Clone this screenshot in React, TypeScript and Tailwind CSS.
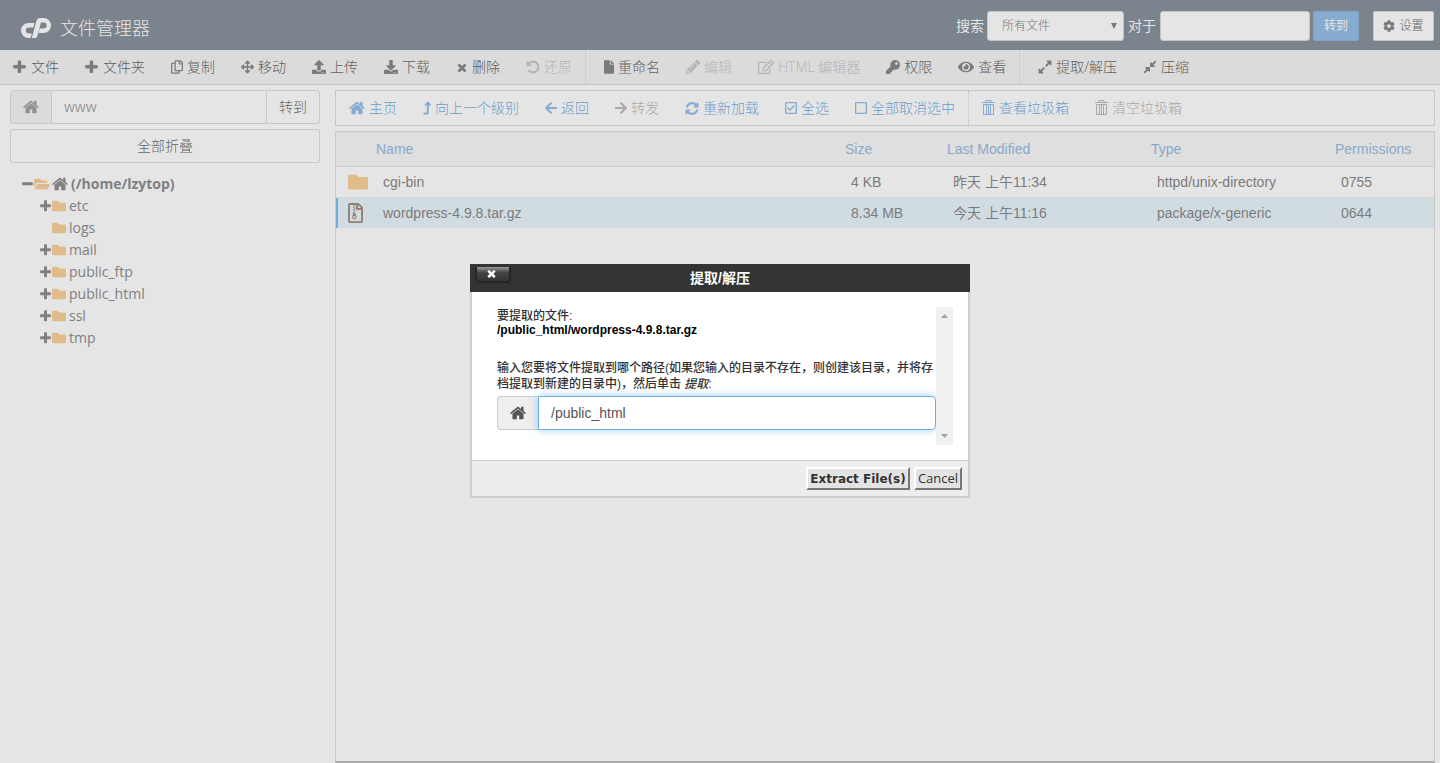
import { useState } from "react";
import type { ReactNode } from "react";
import {
  FaArrowLeft,
  FaArrowRight,
  FaArrowsAlt,
  FaCog,
  FaDownload,
  FaEye,
  FaFile,
  FaFolder,
  FaFolderOpen,
  FaKey,
  FaLevelUpAlt,
  FaPencilAlt,
  FaRegCheckSquare,
  FaRegCopy,
  FaRegEdit,
  FaRegFileArchive,
  FaRegSquare,
  FaUpload,
} from "react-icons/fa";

const glyphs = {
  plus: "M1600 736v192q0 40-28 68t-68 28h-416v416q0 40-28 68t-68 28h-192q-40 0-68-28t-28-68v-416h-416q-40 0-68-28t-28-68v-192q0-40 28-68t68-28h416v-416q0-40 28-68t68-28h192q40 0 68 28t28 68v416h416q40 0 68 28t28 68z",
  minus: "M1600 736v192q0 40-28 68t-68 28h-1216q-40 0-68-28t-28-68v-192q0-40 28-68t68-28h1216q40 0 68 28t28 68z",
  times: "M1490 1322q0 40-28 68l-136 136q-28 28-68 28t-68-28l-294-294-294 294q-28 28-68 28t-68-28l-136-136q-28-28-28-68t28-68l294-294-294-294q-28-28-28-68t28-68l136-136q28-28 68-28t68 28l294 294 294-294q28-28 68-28t68 28l136 136q28 28 28 68t-28 68l-294 294 294 294q28 28 28 68z",
  undo: "M1664 896q0 156-61 298t-164 245-245 164-298 61q-172 0-327-72.5t-264-204.5q-7-10-6.5-22.5t8.5-20.5l137-138q10-9 25-9 16 2 23 12 73 95 179 147t225 52q104 0 198.5-40.5t163.5-109.5 109.5-163.5 40.5-198.5-40.5-198.5-109.5-163.5-163.5-109.5-198.5-40.5q-98 0-188 35.5t-160 101.5l137 138q31 30 14 69-17 40-59 40h-448q-26 0-45-19t-19-45v-448q0-42 40-59 39-17 69 14l130 129q107-101 244.5-156.5t284.5-55.5q156 0 298 61t245 164 164 245 61 298z",
  expand: "M883 1056q0 13-10 23l-332 332 144 144q19 19 19 45t-19 45-45 19h-448q-26 0-45-19t-19-45v-448q0-26 19-45t45-19 45 19l144 144 332-332q10-10 23-10t23 10l114 114q10 10 10 23zm781-864v448q0 26-19 45t-45 19-45-19l-144-144-332 332q-10 10-23 10t-23-10l-114-114q-10-10-10-23t10-23l332-332-144-144q-19-19-19-45t19-45 45-19h448q26 0 45 19t19 45z",
  compress: "M896 960v448q0 26-19 45t-45 19-45-19l-144-144-332 332q-10 10-23 10t-23-10l-114-114q-10-10-10-23t10-23l332-332-144-144q-19-19-19-45t19-45 45-19h448q26 0 45 19t19 45zm755-672q0 13-10 23l-332 332 144 144q19 19 19 45t-19 45-45 19h-448q-26 0-45-19t-19-45v-448q0-26 19-45t45-19 45 19l144 144 332-332q10-10 23-10t23 10l114 114q10 10 10 23z",
  refresh: "M1639 1056q0 5-1 7-64 268-268 434.5t-478 166.5q-146 0-282.5-55t-243.5-157l-129 129q-19 19-45 19t-45-19-19-45v-448q0-26 19-45t45-19h448q26 0 45 19t19 45-19 45l-137 137q71 66 161 102t187 36q134 0 250-65t186-179q11-17 53-117 8-23 30-23h192q13 0 22.5 9.5t9.5 22.5zm25-800v448q0 26-19 45t-45 19h-448q-26 0-45-19t-19-45 19-45l138-138q-148-137-349-137-134 0-250 65t-186 179q-11 17-53 117-8 23-30 23h-199q-13 0-22.5-9.5t-9.5-22.5v-7q65-268 270-434.5t480-166.5q146 0 284 55.5t245 156.5l130-129q19-19 45-19t45 19 19 45z",
  home: "M1472 992v480q0 26-19 45t-45 19h-384v-384h-256v384h-384q-26 0-45-19t-19-45v-480q0-1 .5-3t.5-3l575-474 575 474q1 2 1 6zm223-69l-62 74q-8 9-21 11h-3q-13 0-21-7l-692-577-692 577q-12 8-24 7-13-2-21-11l-62-74q-8-10-7-23.5t11-21.5l719-599q32-26 76-26t76 26l244 204v-195q0-14 9-23t23-9h192q14 0 23 9t9 23v408l219 182q10 8 11 21.5t-7 23.5z",
};

function Glyph({ name, className }: { name: keyof typeof glyphs; className: string }) {
  const narrow = name === "plus" || name === "minus";
  return (
    <svg viewBox={narrow ? "180 80 1560 1560" : "64 64 1664 1664"} fill="currentColor" className={className} aria-hidden="true">
      <path d={glyphs[name]} />
    </svg>
  );
}

function Logo() {
  return (
    <svg viewBox="0 0 30 20" className="mt-[6px] h-5 w-[30px] fill-current" role="img" aria-label="cPanel">
      <path d="M13.5 5H7.5A7.5 7.5 0 0 0 7.5 20H9.5L10.8 15.5H7.8A3 3 0 0 1 7.8 9.5H12.2Z" />
      <path d="M10.8 20L15.4 3Q16.3 0 19.3 0H22.7A7.3 7.5 0 0 1 22.7 15H17.5L18.7 10.5H22.6A3 3 0 0 0 22.6 4.5H20L16.1 18.4Q15.6 20 14 20Z" />
    </svg>
  );
}

function Trash() {
  return (
    <svg viewBox="0 0 13 16" className="h-4 w-[13px] shrink-0" fill="none" stroke="currentColor" aria-hidden="true">
      <path d="M0 2.5h13M4 2.5v-2h5v2" />
      <path d="M1.5 4.5v10h10v-10zM4.5 4.5v10M6.5 4.5v10M8.5 4.5v10" />
    </svg>
  );
}

type Tool = { label: string; icon: ReactNode; off?: boolean };

const fileTools: Tool[][] = [
  [
    { label: "文件", icon: <Glyph name="plus" className="size-[14px]" /> },
    { label: "文件夹", icon: <Glyph name="plus" className="size-[14px]" /> },
    { label: "复制", icon: <FaRegCopy className="h-[14px] w-3" /> },
    { label: "移动", icon: <FaArrowsAlt className="h-[14px] w-[13px]" /> },
    { label: "上传", icon: <FaUpload className="size-[14px]" /> },
    { label: "下载", icon: <FaDownload className="size-[14px]" /> },
    { label: "删除", icon: <Glyph name="times" className="h-[15px] w-3" /> },
    { label: "还原", icon: <Glyph name="undo" className="size-[14px]" />, off: true },
  ],
  [
    { label: "重命名", icon: <FaFile className="h-[14px] w-[10px]" /> },
    { label: "编辑", icon: <FaPencilAlt className="size-[14px]" />, off: true },
    { label: "HTML 编辑器", icon: <FaRegEdit className="size-4" />, off: true },
    { label: "权限", icon: <FaKey className="size-[14px]" /> },
    { label: "查看", icon: <FaEye className="size-4" /> },
  ],
  [
    { label: "提取/解压", icon: <Glyph name="expand" className="size-[14px]" /> },
    { label: "压缩", icon: <Glyph name="compress" className="size-[14px]" /> },
  ],
];

const navTools: Tool[][] = [
  [
    { label: "主页", icon: <Glyph name="home" className="size-4" /> },
    { label: "向上一个级别", icon: <FaLevelUpAlt className="h-[14px] w-2" /> },
    { label: "返回", icon: <FaArrowLeft className="h-[14px] w-3" /> },
    { label: "转发", icon: <FaArrowRight className="h-[14px] w-3" />, off: true },
    { label: "重新加载", icon: <Glyph name="refresh" className="h-[15px] w-[14px]" /> },
    { label: "全选", icon: <FaRegCheckSquare className="h-[14px] w-3" /> },
    { label: "全部取消选中", icon: <FaRegSquare className="h-[14px] w-3" /> },
  ],
  [
    { label: "查看垃圾箱", icon: <Trash /> },
    { label: "清空垃圾箱", icon: <Trash />, off: true },
  ],
];

const folders = [
  { name: "etc", open: true },
  { name: "logs", open: false },
  { name: "mail", open: true },
  { name: "public_ftp", open: true },
  { name: "public_html", open: true },
  { name: "ssl", open: true },
  { name: "tmp", open: true },
];

const files = [
  { name: "cgi-bin", size: "4 KB", modified: "昨天 上午11:34", type: "httpd/unix-directory", mode: "0755", folder: true },
  { name: "wordpress-4.9.8.tar.gz", size: "8.34 MB", modified: "今天 上午11:16", type: "package/x-generic", mode: "0644", folder: false },
];

function Header() {
  return (
    <header className="flex h-[50px] items-center bg-[#7b838c] pr-[6px] pl-[21px] text-[#e5e5e5]">
      <Logo />
      <h1 className="mt-[6px] ml-[9px] text-lg font-light">文件管理器</h1>
      <form className="mt-[2px] ml-auto flex items-center" onSubmit={(e) => e.preventDefault()}>
        <label htmlFor="scope" className="mr-[3px] text-sm">搜索</label>
        <div className="relative">
          <select
            id="scope"
            className="h-[30px] w-[137px] appearance-none rounded-[3px] border border-[#c4c4c4] bg-[#e5e5e5] pl-[14px] text-xs font-light text-[#777]"
          >
            <option>所有文件</option>
          </select>
          <svg viewBox="0 0 6 6" className="pointer-events-none absolute top-3 right-[7px] size-[6px] fill-[#777]" aria-hidden="true">
            <path d="M0 0h6L3 6z" />
          </svg>
        </div>
        <label htmlFor="query" className="mx-1 text-sm">对于</label>
        <input id="query" type="text" className="h-[30px] w-[150px] rounded-[3px] border border-[#c4c4c4] bg-[#e5e5e5] px-2 text-xs" />
        <button type="submit" className="ml-[3px] h-[30px] w-[46px] rounded-[2px] border border-[#7ca6cf] bg-[#87abce] text-xs">
          转到
        </button>
        <button
          type="button"
          className="ml-[14px] flex h-[30px] w-[61px] items-center justify-center gap-1 rounded-[2px] border border-[#c8c8c8] bg-[#e5e5e5] text-xs font-light text-[#666]"
        >
          <FaCog className="size-3 text-[#7a7a7a]" />
          设置
        </button>
      </form>
    </header>
  );
}

function ToolGroups({ groups, on, off, icon }: { groups: Tool[][]; on: string; off: string; icon: string }) {
  return (
    <>
      {groups.map((group, g) => (
        <div
          key={g}
          className={
            "flex h-full items-center" +
            (g < groups.length - 1 ? " border-r border-dotted border-[#c2c2c2]" : "") +
            (g > 0 && groups.length > 2 ? " pl-[5px]" : "")
          }
        >
          {group.map((tool) => (
            <button
              key={tool.label}
              type="button"
              disabled={tool.off}
              className={"flex h-full items-center gap-1 px-[13px] text-sm font-light whitespace-nowrap " + (tool.off ? off : on)}
            >
              <span className={tool.off ? "" : icon}>{tool.icon}</span>
              {tool.label}
            </button>
          ))}
        </div>
      ))}
    </>
  );
}

function Sidebar() {
  return (
    <aside className="w-[310px] shrink-0 text-[#808080]">
      <form className="flex h-[34px]" onSubmit={(e) => e.preventDefault()}>
        <label
          htmlFor="location"
          aria-label="Path"
          className="flex w-[42px] items-center justify-center rounded-l-[3px] border border-[#c8c8c8] bg-[#dbdbdb] text-[#919191]"
        >
          <Glyph name="home" className="size-4" />
        </label>
        <input
          id="location"
          type="text"
          defaultValue="www"
          className="min-w-0 flex-1 border-y border-[#c8c8c8] bg-[#e5e5e5] px-3 text-sm text-[#999]"
        />
        <button type="submit" className="w-[54px] rounded-r-[3px] border border-[#c8c8c8] text-sm font-light text-[#666]">
          转到
        </button>
      </form>
      <button type="button" className="mt-[5px] h-[34px] w-full rounded-[2px] border border-[#c8c8c8] text-sm font-light text-[#666]">
        全部折叠
      </button>
      <ul className="mt-[10px] pl-3 text-sm leading-[22px]">
        <li>
          <div className="flex items-center font-bold">
            <Glyph name="minus" className="size-3" />
            <FaFolderOpen className="size-4 text-[#dfbc8a]" />
            <Glyph name="home" className="mr-[3px] ml-[2px] size-4" />
            <span>(/home/lzytop)</span>
          </div>
          <ul className="pl-[18px]">
            {folders.map((f) => (
              <li key={f.name} className="flex items-center">
                {f.open ? <Glyph name="plus" className="size-3" /> : <span className="w-3" />}
                <FaFolder className="size-[14px] text-[#dfbc8a]" />
                <span className="ml-[3px]">{f.name}</span>
              </li>
            ))}
          </ul>
        </li>
      </ul>
    </aside>
  );
}

function FileTable() {
  return (
    <div className="mt-[5px] flex-1 border border-b-2 border-[#c8c8c8] border-b-[#ababab]">
      <table className="w-full table-fixed border-collapse text-left font-['Liberation_Sans','Noto_Sans_CJK_SC',sans-serif] text-sm text-[#7b7b7b]">
        <colgroup>
          <col className="w-[35px]" />
          <col />
          <col className="w-[102px]" />
          <col className="w-[204px]" />
          <col className="w-[184px]" />
          <col className="w-[104px]" />
        </colgroup>
        <thead>
          <tr className="h-[34px] border-b border-[#c8c8c8] bg-[#dfdfdf] text-[#87a9cc]">
            <th aria-label="Icon" />
            {["Name", "Size", "Last Modified", "Type", "Permissions"].map((h) => (
              <th key={h} className="pl-[5px] font-normal">{h}</th>
            ))}
          </tr>
        </thead>
        <tbody>
          {files.map((f) => (
            <tr
              key={f.name}
              className={
                f.folder
                  ? "h-[31px]"
                  : "h-[31px] border-t border-[#d4d8da] bg-[#d1dce2] shadow-[inset_2px_0_0_#6ab0d2]"
              }
            >
              <td className="pl-3">
                {f.folder ? (
                  <FaFolder className="size-5 text-[#dfbc8a]" />
                ) : (
                  <FaRegFileArchive className="h-5 w-[15px] text-[#94806f]" />
                )}
              </td>
              <td className="pl-3">{f.name}</td>
              <td className="pl-[11px]">{f.size}</td>
              <td className="pl-[11px]">{f.modified}</td>
              <td className="pl-[11px]">{f.type}</td>
              <td className="pl-[11px]">{f.mode}</td>
            </tr>
          ))}
        </tbody>
      </table>
    </div>
  );
}

function ExtractDialog() {
  const [path, setPath] = useState("/public_html");
  return (
    <div className="fixed inset-x-0 top-[264px] flex justify-center">
      <section
        role="dialog"
        aria-labelledby="dialog-title"
        className="w-[500px] bg-white font-['Liberation_Sans','Noto_Sans_CJK_SC',sans-serif] text-[#333]"
      >
        <div className="relative h-7 bg-[#333]">
          <h2 id="dialog-title" className="text-center text-sm leading-7 font-bold text-white">提取/解压</h2>
          <button
            type="button"
            aria-label="Close"
            className="absolute top-[3px] left-[5px] flex h-4 w-9 items-center justify-center rounded-b-[4px] border-2 border-t-0 border-[#20272d] bg-linear-to-b from-[#999] from-0% via-[#444] via-40% to-[#333] pr-[3px] pb-px text-white"
          >
            <Glyph name="times" className="size-[11px]" />
          </button>
        </div>
        <div className="border-x-2 border-b-2 border-[#ccc]">
          <div className="flex py-[15px] pr-[15px] pl-[25px]">
            <div className="h-[138px] flex-1 text-xs font-medium">
              <p className="pt-[2px] leading-[14px]">
                要提取的文件:
                <br />
                <strong className="text-black">/public_html/wordpress-4.9.8.tar.gz</strong>
              </p>
              <label htmlFor="target" className="mt-[23px] block leading-4">
                输入您要将文件提取到哪个路径(如果您输入的目录不存在，则创建该目录，并将存档提取到新建的目录中)，然后单击 <em>提取</em>:
              </label>
              <div className="mt-1 flex h-[34px]">
                <span className="flex w-[41px] items-center justify-center rounded-l-[4px] border border-r-0 border-[#ccc] bg-[#eee] text-[#555]">
                  <Glyph name="home" className="size-4" />
                </span>
                <input
                  id="target"
                  type="text"
                  value={path}
                  onChange={(e) => setPath(e.target.value)}
                  className="min-w-0 flex-1 rounded-r-[4px] border border-[#66afe9] px-3 text-sm font-normal text-[#555] shadow-[0_0_8px_rgba(102,175,233,0.6)] outline-none"
                />
              </div>
            </div>
            <div className="flex w-[17px] flex-col items-center justify-between bg-[#f1f1f1] py-[7px] text-[#a3a3a3]" aria-hidden="true">
              <svg viewBox="0 0 7 4" className="h-1 w-[7px] fill-current"><path d="M0 4h7L3.5 0z" /></svg>
              <svg viewBox="0 0 7 4" className="h-1 w-[7px] fill-current"><path d="M0 0h7L3.5 4z" /></svg>
            </div>
          </div>
          <div className="flex h-9 items-center justify-end gap-1 border-t border-[#ccc] bg-[#ededed] pr-[6px]">
            <button
              type="button"
              className="h-[23px] w-[104px] border-2 border-t-white border-r-[#767676] border-b-[#767676] border-l-white bg-[#e3e3e3] font-['DejaVu_Sans',sans-serif] text-xs leading-none font-bold whitespace-nowrap"
            >
              Extract File(s)
            </button>
            <button
              type="button"
              className="h-[23px] w-[48px] border-2 border-t-white border-r-[#767676] border-b-[#767676] border-l-white bg-[#e3e3e3] font-['Open_Sans',sans-serif] text-[13px] leading-none"
            >
              Cancel
            </button>
          </div>
        </div>
      </section>
    </div>
  );
}

export default function App() {
  return (
    <div className="flex min-h-screen flex-col bg-[#e5e5e5] font-['Open_Sans','Noto_Sans_CJK_SC',sans-serif] text-[#555]">
      <Header />
      <nav className="flex h-[35px] items-center border-b border-[#c5c7ca] bg-[#dbdbdb]">
        <ToolGroups groups={fileTools} on="text-[#606060]" off="text-[#b4b4b4]" icon="text-[#7b7b7b]" />
      </nav>
      <div className="flex flex-1 gap-[15px] pt-[5px] pr-[5px] pl-[10px]">
        <Sidebar />
        <main className="flex min-w-0 flex-1 flex-col">
          <nav className="flex h-9 items-center border border-[#c8c8c8]">
            <ToolGroups groups={navTools} on="text-[#6e9dcc]" off="text-[#a8a8a8]" icon="text-[#87abce]" />
          </nav>
          <FileTable />
        </main>
      </div>
      <ExtractDialog />
    </div>
  );
}
